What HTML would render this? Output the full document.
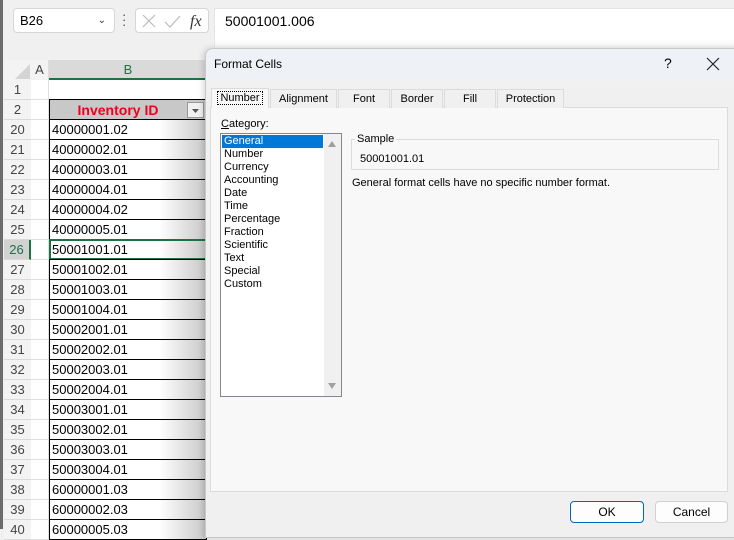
<!DOCTYPE html>
<html><head><style>
*{margin:0;padding:0;box-sizing:border-box}
body{width:734px;height:529px;overflow:hidden;background:#f0f0f0;font-family:"Liberation Sans",sans-serif;position:relative;font-size:12px;color:#000}
.a{position:absolute}
.rh{position:absolute;left:4px;width:27px;height:20px;text-align:center;line-height:20px;font-size:13px;color:#444;border-bottom:1px solid #dadada;background:#f3f3f3}
.ca{position:absolute;left:31px;width:18px;height:20px;border-bottom:1px solid #e0e0e0;border-right:1px solid #e0e0e0;background:#fff}
.cb{position:absolute;left:49px;width:158px;height:21px;border:1px solid #000;background:linear-gradient(to right,#fff 0%,#fff 70%,#c8c8c8 100%);font-size:13px;line-height:19px;padding-left:2px}
.li{position:absolute;left:224px;font-size:11px;line-height:13px;color:#000}
.tab{position:absolute;top:89px;height:19px;border:1px solid #dcdcdc;border-bottom:none;background:#f0f0f0;font-size:11px;line-height:18px;text-align:center}
</style></head><body>
<div class="a" style="left:0;top:0;width:3px;height:529px;background:#6b6b6b"></div>
<!-- name box -->
<div class="a" style="left:13px;top:8px;width:102px;height:25px;background:#fff;border:1px solid #d6d6d6;border-radius:4px;font-size:13px;line-height:23px;padding-left:6px">B26<span style="position:absolute;right:8px;top:0;font-size:10px;color:#333">&#8964;</span></div>
<div class="a" style="left:122px;top:12px;width:3px;font-size:13px;line-height:5px;color:#444">·<br>·<br>·</div>
<div class="a" style="left:135px;top:8px;width:74px;height:25px;background:#fff;border:1px solid #d6d6d6;border-radius:4px"></div>
<svg class="a" style="left:140px;top:12px" width="70" height="18"><path d="M3 3L15 15M15 3L3 15" stroke="#bbb" stroke-width="1.2"/><path d="M25 10L30 15L40 4" stroke="#bbb" stroke-width="1.2" fill="none"/><text x="50" y="14" font-family="Liberation Serif" font-style="italic" font-size="16" fill="#333">fx</text></svg>
<div class="a" style="left:214px;top:8px;width:520px;height:45px;background:linear-gradient(#fff 70%,#f0f0f0);border:1px solid #e4e4e4;border-right:none;font-size:14px;padding:4px 0 0 10px">50001001.006</div>
<!-- grid headers -->
<div class="a" style="left:4px;top:60px;width:27px;height:20px;background:#f3f3f3"><svg width="27" height="20"><path d="M26 4L26 19L11 19Z" fill="#d4d4d4"/></svg></div>
<div class="a" style="left:31px;top:60px;width:18px;height:20px;background:#f3f3f3;border-right:1px solid #ddd;text-align:center;font-size:13px;line-height:19px;color:#444">A</div>
<div class="a" style="left:49px;top:60px;width:158px;height:20px;background:#dadada;border-bottom:2px solid #1e7145;text-align:center;font-size:13px;line-height:19px;color:#1e7145">B</div>
<div class="rh" style="top:80px">1</div><div class="ca" style="top:80px"></div><div class="a" style="left:49px;top:80px;width:158px;height:20px;background:#fff"></div>
<div class="rh" style="top:100px">2</div><div class="ca" style="top:100px"></div>
<div class="a" style="left:49px;top:99px;width:158px;height:22px;background:#c8c8c8;border:1px solid #000;color:#f0001e;font-weight:bold;font-size:14px;line-height:20px;text-align:center;padding-right:20px">Inventory ID</div>
<div class="a" style="left:187px;top:102px;width:17px;height:16px;background:#f0f0f0;border:1px solid #999"><svg width="15" height="14"><path d="M4 6L11 6L7.5 10Z" fill="#555"/></svg></div>
<div id="rows"></div>
<script>
var v=["40000001.02","40000002.01","40000003.01","40000004.01","40000004.02","40000005.01","50001001.01","50001002.01","50001003.01","50001004.01","50002001.01","50002002.01","50002003.01","50002004.01","50003001.01","50003002.01","50003003.01","50003004.01","60000001.03","60000002.03","60000005.03"];
var h="";for(var i=0;i<v.length;i++){var t=120+i*20;var sel=i==6;
h+='<div class="rh" style="top:'+t+'px;'+(sel?'background:#d2d2d2;color:#1e7145;border-right:2px solid #1e7145':'')+'">'+(20+i)+'</div><div class="ca" style="top:'+t+'px"></div><div class="cb" style="top:'+(t-1)+'px;'+(sel?'border:2px solid #1e7145;line-height:17px;padding-left:1px':'')+'">'+v[i]+'</div>';}
document.getElementById('rows').innerHTML=h;
</script>
<!-- dialog -->
<div class="a" style="left:205px;top:48px;width:535px;height:490px;background:#f0f0f0;border:1px solid #c8c8c8;border-radius:8px 0 0 0;box-shadow:-2px 0 6px rgba(0,0,0,.15)">
<div class="a" style="left:0;top:0;width:534px;height:32px;background:#eef2f6;border-radius:8px 0 0 0"></div>
<div class="a" style="left:8px;top:8px;font-size:12px">Format Cells</div>
<div class="a" style="left:458px;top:6px;font-size:14px">?</div>
<svg class="a" style="left:500px;top:8px" width="14" height="14"><path d="M1 1L13 13M13 1L1 13" stroke="#222" stroke-width="1.2"/></svg>
</div>
<div class="a" style="left:210px;top:107px;width:518px;height:385px;background:#f8f8f8;border:1px solid #dcdcdc"></div>
<div class="tab" style="left:211px;top:88px;height:20px;width:58px;background:#f8f8f8;border-color:#dcdcdc"><span style="border:1px dotted #000;padding:0 2px">Number</span></div>
<div class="tab" style="left:270px;width:67px">Alignment</div>
<div class="tab" style="left:338px;width:52px">Font</div>
<div class="tab" style="left:391px;width:52px">Border</div>
<div class="tab" style="left:444px;width:52px">Fill</div>
<div class="tab" style="left:497px;width:67px">Protection</div>
<div class="a" style="left:221px;top:118px;font-size:11px"><u>C</u>ategory:</div>
<div class="a" style="left:220px;top:133px;width:122px;height:264px;background:#fff;border:1px solid #828790"></div>
<div class="a" style="left:324px;top:134px;width:17px;height:262px;background:#f0f0f0"></div>
<svg class="a" style="left:325px;top:138px" width="14" height="258"><path d="M3 9L11 9L7 3Z" fill="#a0a0a0"/><path d="M3 245L11 245L7 251Z" fill="#a0a0a0"/></svg>
<div class="a" style="left:222px;top:135px;width:101px;height:13px;background:#0078d7"></div>
<div class="li" style="top:135px;color:#fff">General</div>
<div class="li" style="top:148px">Number</div>
<div class="li" style="top:161px">Currency</div>
<div class="li" style="top:174px">Accounting</div>
<div class="li" style="top:187px">Date</div>
<div class="li" style="top:200px">Time</div>
<div class="li" style="top:213px">Percentage</div>
<div class="li" style="top:226px">Fraction</div>
<div class="li" style="top:239px">Scientific</div>
<div class="li" style="top:252px">Text</div>
<div class="li" style="top:265px">Special</div>
<div class="li" style="top:278px">Custom</div>
<div class="a" style="left:351px;top:139px;width:368px;height:31px;border:1px solid #dcdcdc"></div>
<div class="a" style="left:355px;top:133px;background:#f8f8f8;padding:0 2px;font-size:11px">Sample</div>
<div class="a" style="left:360px;top:153px;font-size:11px">50001001.01</div>
<div class="a" style="left:352px;top:177px;font-size:11px">General format cells have no specific number format.</div>
<div class="a" style="left:570px;top:501px;width:74px;height:22px;background:#fdfdfd;border:1px solid #0067c0;border-radius:4px;text-align:center;line-height:20px;font-size:12px">OK</div>
<div class="a" style="left:655px;top:501px;width:73px;height:22px;background:#fdfdfd;border:1px solid #d0d0d0;border-radius:4px;text-align:center;line-height:20px;font-size:12px">Cancel</div>
</body></html>
